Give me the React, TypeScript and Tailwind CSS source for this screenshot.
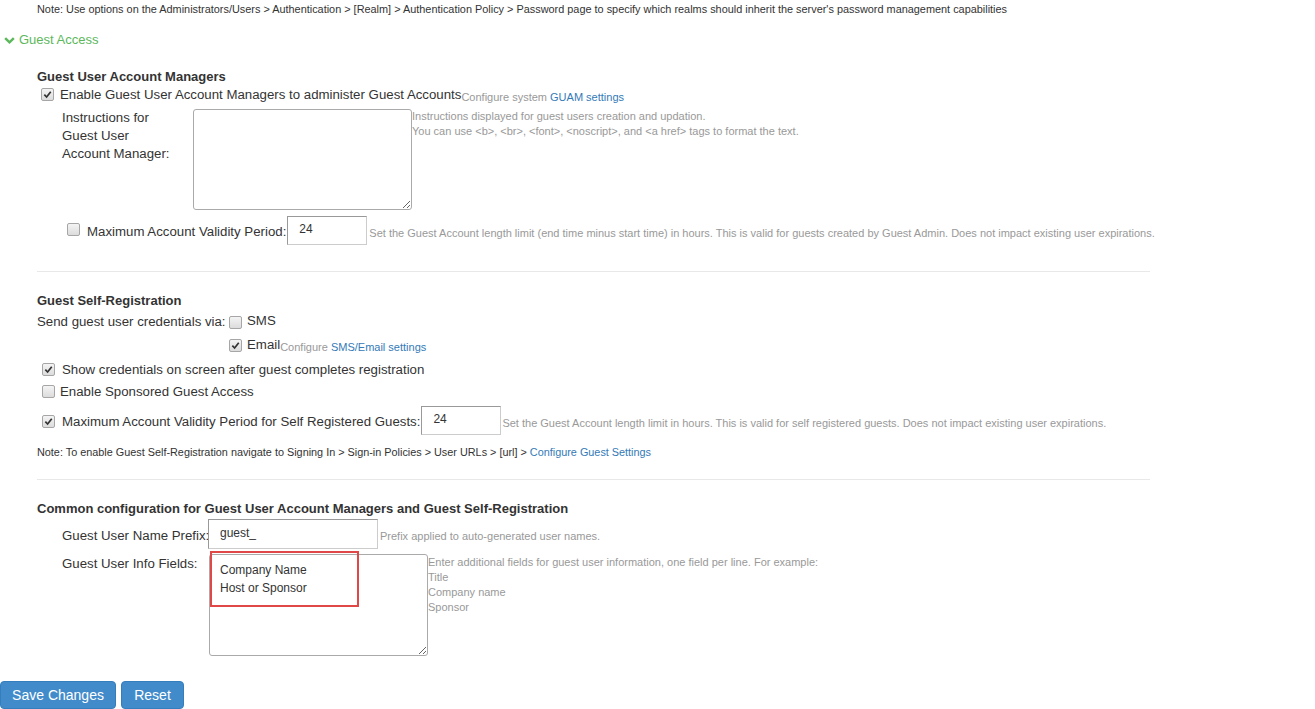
import React from "react";

function Box({ checked }: { checked?: boolean }) {
  return (
    <span className="inline-flex h-[13px] w-[13px] shrink-0 items-center justify-center rounded-[2px] border border-[#a6a6a6] bg-gradient-to-b from-[#f4f4f4] to-[#dcdcdc]">
      {checked && (
        <svg viewBox="0 0 10 10" className="h-[9px] w-[9px]">
          <path d="M1.5 5.2 L4 7.8 L8.6 2" fill="none" stroke="#333" strokeWidth="1.9" />
        </svg>
      )}
    </span>
  );
}

function Help({ children, className = "" }: { children: React.ReactNode; className?: string }) {
  return <span className={"whitespace-nowrap text-[11px] text-[#999] " + className}>{children}</span>;
}

const field =
  "h-[29px] w-[80px] shrink-0 border border-[#ccc] border-t-[#999] border-l-[#999] pl-[11px] pb-[3px] text-[12px] text-[#333] outline-none";

export default function App() {
  return (
    <div className="min-h-screen whitespace-nowrap bg-white text-[13.25px] text-[#333]" style={{ fontFamily: '"Liberation Sans", Arial, sans-serif' }}>
      <div className="h-[18px] pl-[37px] text-[10.9px] leading-[18px]">
        Note: Use options on the Administrators/Users &gt; Authentication &gt; [Realm] &gt; Authentication Policy &gt; Password page to specify which realms should inherit the server's password management capabilities
      </div>

      <div className="mt-[12px] flex h-[20px] items-center pl-[4px] text-[13px] text-[#5cb85c]">
        <svg viewBox="0 0 12 10" className="mr-[4px] h-[9px] w-[11px]">
          <path d="M1.2 2.4 L6 7 L10.8 2.4" fill="none" stroke="#5cb85c" strokeWidth="2.8" />
        </svg>
        Guest Access
      </div>

      <div className="pl-[37px]">
        <div className="mt-[18px] h-[18px] text-[13px] font-bold leading-[18px]">Guest User Account Managers</div>

        <div className="flex h-[18px] items-center leading-[18px]">
          <span className="ml-[4px] mr-[6px]"><Box checked /></span>
          <span>Enable Guest User Account Managers to administer Guest Accounts</span>
          <Help className="mt-[4px]">
            Configure system <span className="text-[#337ab7]">GUAM settings</span>
          </Help>
        </div>

        <div className="mt-[5px] flex">
          <div className="ml-[25px] w-[131px] shrink-0 leading-[18px]">
            Instructions for<br />Guest User<br />Account Manager:
          </div>
          <textarea className="h-[101px] w-[219px] shrink-0 rounded-[3px] border border-[#aaa] bg-white" />
          <div className="text-[11px] leading-[15px] text-[#999]">
            Instructions displayed for guest users creation and updation.<br />
            You can use &lt;b&gt;, &lt;br&gt;, &lt;font&gt;, &lt;noscript&gt;, and &lt;a href&gt; tags to format the text.
          </div>
        </div>

        <div className="mt-[6px] flex h-[29px] items-center">
          <span className="ml-[30px] mr-[7px] mt-[2px]"><Box /></span>
          <span className="mt-[3px]">Maximum Account Validity Period:</span>
          <input defaultValue="24" className={"ml-[1px] " + field} />
          <Help className="ml-[2px] mt-[5px]">
            Set the Guest Account length limit (end time minus start time) in hours. This is valid for guests created by Guest Admin. Does not impact existing user expirations.
          </Help>
        </div>

        <div className="mt-[26px] h-px w-[1113px] bg-[#e8e8e8]" />

        <div className="mt-[20px] h-[18px] text-[13px] font-bold leading-[18px]">Guest Self-Registration</div>

        <div className="mt-[3px] flex h-[18px] items-center">
          <span className="w-[192px] shrink-0">Send guest user credentials via:</span>
          <Box />
          <span className="ml-[5px] -mt-[2px]">SMS</span>
        </div>

        <div className="mt-[5px] flex h-[18px] items-center">
          <span className="ml-[192px] mt-[1px]"><Box checked /></span>
          <span className="ml-[5px] -mt-[1px]">Email</span>
          <Help className="mt-[4px]">
            Configure <span className="text-[#337ab7]">SMS/Email settings</span>
          </Help>
        </div>

        <div className="mt-[6px] flex h-[18px] items-center">
          <span className="ml-[5px] mr-[7px] mt-[2px]"><Box checked /></span>
          <span className="mt-[1px]">Show credentials on screen after guest completes registration</span>
        </div>

        <div className="mt-[5px] flex h-[18px] items-center">
          <span className="ml-[5px] mr-[5px] mt-[3px]"><Box /></span>
          <span>Enable Sponsored Guest Access</span>
        </div>

        <div className="mt-[5px] flex h-[29px] items-center">
          <span className="ml-[5px] mr-[7px] mt-[2px]"><Box checked /></span>
          <span className="mt-[3px]">Maximum Account Validity Period for Self Registered Guests:</span>
          <input defaultValue="24" className={"ml-[1px] " + field} />
          <Help className="ml-[1px] mt-[5px]">
            Set the Guest Account length limit in hours. This is valid for self registered guests. Does not impact existing user expirations.
          </Help>
        </div>

        <div className="mt-[8px] h-[18px] text-[10.85px] leading-[18px]">
          Note: To enable Guest Self-Registration navigate to Signing In &gt; Sign-in Policies &gt; User URLs &gt; [url] &gt; <span className="text-[#337ab7]">Configure Guest Settings</span>
        </div>

        <div className="mt-[18px] h-px w-[1113px] bg-[#e8e8e8]" />

        <div className="mt-[20px] h-[18px] text-[13px] font-bold leading-[18px]">
          Common configuration for Guest User Account Managers and Guest Self-Registration
        </div>

        <div className="mt-[1px] flex h-[30px] items-center">
          <span className="ml-[25px] mt-[3px] w-[146px] shrink-0">Guest User Name Prefix:</span>
          <input defaultValue="guest_" className="h-[30px] w-[170px] shrink-0 border border-[#ccc] border-t-[#999] border-l-[#999] pl-[11px] pb-[3px] text-[12px] text-[#333] outline-none" />
          <Help className="ml-[2px] mt-[5px]">Prefix applied to auto-generated user names.</Help>
        </div>

        <div className="mt-[5px] flex">
          <span className="ml-[25px] mt-[1px] w-[147px] shrink-0 leading-[18px]">Guest User Info Fields:</span>
          <div className="relative shrink-0">
            <textarea
              defaultValue={"Company Name\nHost or Sponsor"}
              className="block h-[102px] w-[219px] resize-y rounded-[3px] border border-[#aaa] bg-white px-[10px] pt-[6px] text-[12px] leading-[18px] text-[#333] outline-none"
            />
            <div className="pointer-events-none absolute left-[1px] top-[-3px] h-[56px] w-[149px] border-2 border-[#e04848]" />
          </div>
          <div className="pt-[1px] text-[11px] leading-[15px] text-[#999]">
            Enter additional fields for guest user information, one field per line. For example:<br />
            Title<br />Company name<br />Sponsor
          </div>
        </div>
      </div>

      <div className="mt-[25px] flex gap-[5px]">
        <button className="h-[28px] w-[116px] rounded-[4px] border border-[#357ebd] bg-[#428bca] text-[14px] text-white">Save Changes</button>
        <button className="h-[28px] w-[63px] rounded-[4px] border border-[#357ebd] bg-[#428bca] text-[14px] text-white">Reset</button>
      </div>
    </div>
  );
}
